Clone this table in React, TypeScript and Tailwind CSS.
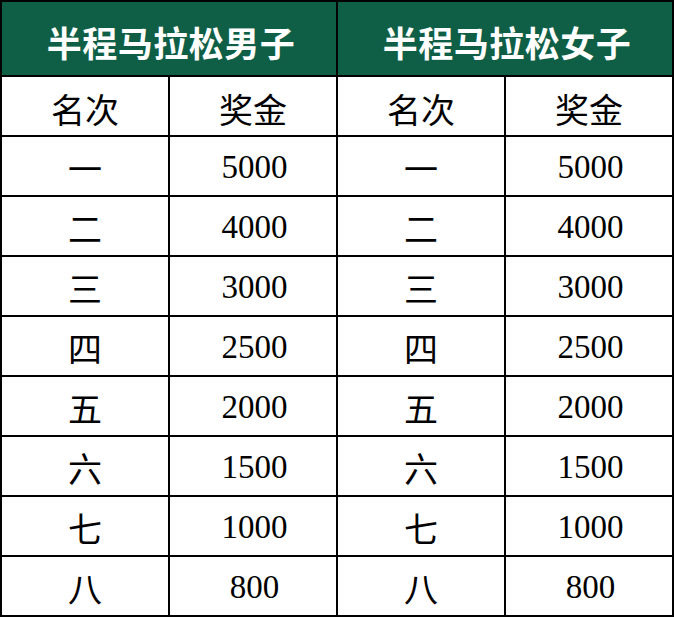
import React from "react";

const rows: [string, string][] = [
  ["一", "5000"],
  ["二", "4000"],
  ["三", "3000"],
  ["四", "2500"],
  ["五", "2000"],
  ["六", "1500"],
  ["七", "1000"],
  ["八", "800"],
];

const cjk = "font-['Noto_Sans_CJK_SC',sans-serif]";
const num = "font-['Liberation_Serif','Noto_Sans_CJK_SC',serif]";

export default function App() {
  return (
    <div className="w-[674px] h-[617px] bg-white">
      <div className="grid grid-cols-[166px_166px_166px_166px] grid-rows-[73px_repeat(9,58px)] gap-[2px] bg-black p-[2px] w-[674px] h-[617px]">
        <div className={`col-span-2 bg-[#0f5f47] text-white flex items-center justify-center pt-[8px] pl-[4px] text-[35px] font-bold tracking-[0.5px] ${cjk}`}>
          半程马拉松男子
        </div>
        <div className={`col-span-2 bg-[#0f5f47] text-white flex items-center justify-center pt-[8px] pl-[4px] text-[35px] font-bold tracking-[0.5px] ${cjk}`}>
          半程马拉松女子
        </div>
        {[0, 1].map((k) => (
          <React.Fragment key={"h" + k}>
            <div className={`bg-white flex items-center justify-center pt-[5px] text-[34px] text-black ${cjk}`}>名次</div>
            <div className={`bg-white flex items-center justify-center pt-[5px] text-[34px] text-black ${cjk}`}>奖金</div>
          </React.Fragment>
        ))}
        {rows.map(([r, v]) => (
          <React.Fragment key={r}>
            <div className={`bg-white flex items-center justify-center pt-[3px] text-[34px] text-black ${cjk}`}>{r}</div>
            <div className={`bg-white flex items-center justify-center pl-[3px] pt-[3px] text-[33px] text-black ${num}`}>{v}</div>
            <div className={`bg-white flex items-center justify-center pt-[3px] text-[34px] text-black ${cjk}`}>{r}</div>
            <div className={`bg-white flex items-center justify-center pl-[3px] pt-[3px] text-[33px] text-black ${num}`}>{v}</div>
          </React.Fragment>
        ))}
      </div>
    </div>
  );
}
